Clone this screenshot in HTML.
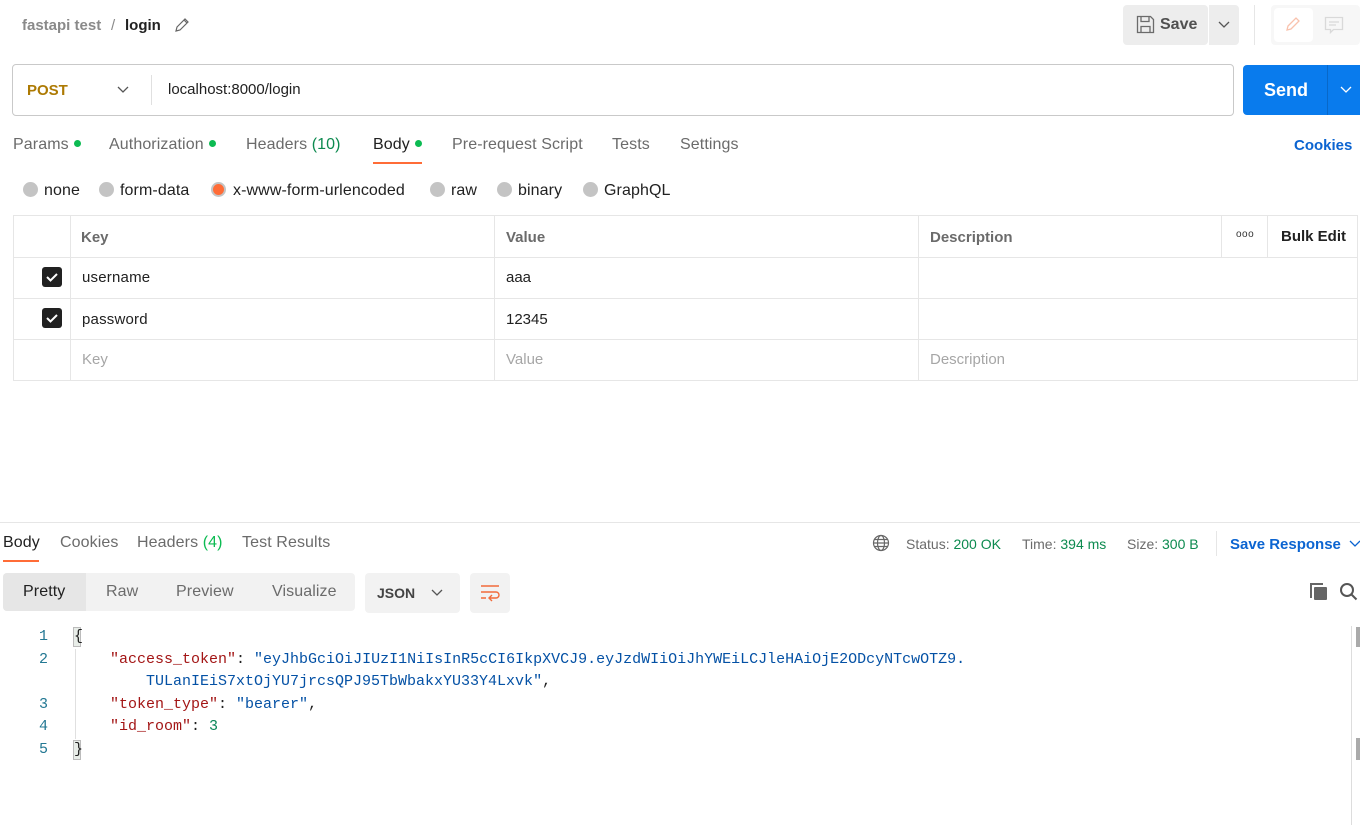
<!DOCTYPE html>
<html><head><meta charset="utf-8"><style>
*{margin:0;padding:0;box-sizing:border-box}
body{width:1360px;height:825px;background:#fff;font-family:"Liberation Sans",sans-serif;color:#212121;position:relative;overflow:hidden;font-size:15px}
.a{position:absolute;white-space:nowrap}
.t{font-size:16px;letter-spacing:0.1px}
.g{color:#6b6b6b}
.dot{display:inline-block;width:7px;height:7px;border-radius:50%;background:#0cbb52;margin-left:5px;vertical-align:2px}
.rad{position:absolute;width:15px;height:15px;border-radius:50%;background:#c4c4c4}
.hl{position:absolute;background:#e6e6e6}
.cb{position:absolute;width:20px;height:20px;border-radius:3px;background:#212121}
.mono{font-family:"Liberation Mono",monospace;font-size:15px}
.k{color:#a31515}.s{color:#0451a5}.n{color:#098658}
.ln{position:absolute;left:20px;width:28px;text-align:right;color:#237893;font-family:"Liberation Mono",monospace;font-size:15px}
</style></head><body>
<div class="a" style="left:22px;top:17px;font-size:15px;font-weight:bold;color:#8a8a8a">fastapi test</div>
<div class="a" style="left:111px;top:17px;font-size:15px;color:#8a8a8a">/</div>
<div class="a" style="left:125px;top:17px;font-size:15px;font-weight:bold;color:#212121">login</div>
<svg class="a" style="left:174px;top:17px" width="16" height="16" viewBox="0 0 16 16"><path d="M2 14l1-4 8-8 3 3-8 8z M10 3l3 3" fill="none" stroke="#666" stroke-width="1.2"/></svg>
<div class="a" style="left:1123px;top:5px;width:85px;height:40px;background:#ededed;border-radius:4px"></div>
<svg class="a" style="left:1136px;top:15px" width="19" height="19" viewBox="0 0 19 19"><path d="M1.5 1.5h13l3 3v13h-16z M5 1.5v5h8v-5 M5 17.5v-6h9v6" fill="none" stroke="#6b6b6b" stroke-width="1.3"/></svg>
<div class="a" style="left:1160px;top:16px;font-weight:bold;color:#505050;font-size:16px">Save</div>
<div class="a" style="left:1209px;top:5px;width:30px;height:40px;background:#ededed;border-radius:0 4px 4px 0"></div>
<svg class="a" style="left:1217px;top:19px" width="14" height="12"><path d="M2 3l5 5 5-5" fill="none" stroke="#555" stroke-width="1.3"/></svg>
<div class="a" style="left:1254px;top:5px;width:1px;height:40px;background:#e6e6e6"></div>
<div class="a" style="left:1271px;top:5px;width:89px;height:40px;background:#f7f7f7;border-radius:4px"></div>
<div class="a" style="left:1274px;top:8px;width:39px;height:34px;background:#fff;border-radius:4px"></div>
<svg class="a" style="left:1284px;top:15px" width="18" height="18" viewBox="0 0 18 18"><path d="M3 15l1-4 8-8 3 3-8 8z" fill="none" stroke="#f9c2ad" stroke-width="1.3"/></svg>
<svg class="a" style="left:1324px;top:16px" width="20" height="18" viewBox="0 0 20 18"><path d="M1.5 1.5h17v12h-9l-3 3v-3h-5z M5 6h10 M5 9h7" fill="none" stroke="#d9d9d9" stroke-width="1.3"/></svg>
<div class="a" style="left:12px;top:64px;width:1222px;height:52px;border:1px solid #c9c9c9;border-radius:4px"></div>
<div class="a" style="left:27px;top:82px;font-weight:bold;color:#ad7a03">POST</div>
<svg class="a" style="left:116px;top:84px" width="14" height="12"><path d="M2 3l5 5 5-5" fill="none" stroke="#555" stroke-width="1.3"/></svg>
<div class="a" style="left:151px;top:75px;width:1px;height:30px;background:#e0e0e0"></div>
<div class="a" style="left:168px;top:81px;color:#212121">localhost:8000/login</div>
<div class="a" style="left:1243px;top:65px;width:117px;height:50px;background:#097bed;border-radius:4px 0 0 4px"></div>
<div class="a" style="left:1327px;top:65px;width:1px;height:50px;background:#0868c9"></div>
<div class="a" style="left:1264px;top:80px;color:#fff;font-weight:bold;font-size:18px">Send</div>
<svg class="a" style="left:1339px;top:84px" width="14" height="12"><path d="M2 3l5 5 5-5" fill="none" stroke="#fff" stroke-width="1.3"/></svg>
<div class="a g t" style="left:13px;top:136px">Params<span class="dot"></span></div>
<div class="a g t" style="left:109px;top:136px">Authorization<span class="dot"></span></div>
<div class="a g t" style="left:246px;top:136px">Headers <span style="color:#0c8a4f">(10)</span></div>
<div class="a t" style="left:373px;top:136px;color:#212121">Body<span class="dot"></span></div>
<div class="a" style="left:373px;top:162px;width:49px;height:2px;background:#ff6c37"></div>
<div class="a g t" style="left:452px;top:136px">Pre-request Script</div>
<div class="a g t" style="left:612px;top:136px">Tests</div>
<div class="a g t" style="left:680px;top:136px">Settings</div>
<div class="a" style="left:1294px;top:137px;color:#0b64d1;font-weight:bold">Cookies</div>
<div class="rad" style="left:23px;top:182px"></div><div class="a t" style="left:44px;top:182px">none</div>
<div class="rad" style="left:99px;top:182px"></div><div class="a t" style="left:120px;top:182px">form-data</div>
<div class="rad" style="left:211px;top:182px;background:#ff6c37;border:2px solid #c4c4c4"></div><div class="a t" style="left:233px;top:182px">x-www-form-urlencoded</div>
<div class="rad" style="left:430px;top:182px"></div><div class="a t" style="left:451px;top:182px">raw</div>
<div class="rad" style="left:497px;top:182px"></div><div class="a t" style="left:518px;top:182px">binary</div>
<div class="rad" style="left:583px;top:182px"></div><div class="a t" style="left:604px;top:182px">GraphQL</div>
<div class="a" style="left:13px;top:215px;width:1345px;height:166px;border:1px solid #e6e6e6"></div>
<div class="hl" style="left:13px;top:257px;width:1345px;height:1px"></div>
<div class="hl" style="left:13px;top:298px;width:1345px;height:1px"></div>
<div class="hl" style="left:13px;top:339px;width:1345px;height:1px"></div>
<div class="hl" style="left:70px;top:215px;width:1px;height:166px"></div>
<div class="hl" style="left:494px;top:215px;width:1px;height:166px"></div>
<div class="hl" style="left:918px;top:215px;width:1px;height:166px"></div>
<div class="hl" style="left:1221px;top:215px;width:1px;height:42px"></div>
<div class="hl" style="left:1267px;top:215px;width:1px;height:42px"></div>
<div class="a" style="left:81px;top:229px;font-weight:bold;color:#6b6b6b">Key</div>
<div class="a" style="left:506px;top:229px;font-weight:bold;color:#6b6b6b">Value</div>
<div class="a" style="left:930px;top:229px;font-weight:bold;color:#6b6b6b">Description</div>
<div class="a" style="left:1236px;top:229px;font-size:10px;color:#333;letter-spacing:0.5px">ooo</div>
<div class="a" style="left:1281px;top:228px;font-weight:bold;color:#212121">Bulk Edit</div>
<div class="cb" style="left:42px;top:267px"></div><svg class="a" style="left:45px;top:270px" width="14" height="14"><path d="M2 7l3.5 3.5L12 4" fill="none" stroke="#fff" stroke-width="2"/></svg>
<div class="cb" style="left:42px;top:308px"></div><svg class="a" style="left:45px;top:311px" width="14" height="14"><path d="M2 7l3.5 3.5L12 4" fill="none" stroke="#fff" stroke-width="2"/></svg>
<div class="a" style="left:82px;top:269px;letter-spacing:0.2px">username</div>
<div class="a" style="left:506px;top:269px">aaa</div>
<div class="a" style="left:82px;top:311px;letter-spacing:0.2px">password</div>
<div class="a" style="left:506px;top:311px">12345</div>
<div class="a" style="left:82px;top:351px;color:#a6a6a6">Key</div>
<div class="a" style="left:506px;top:351px;color:#a6a6a6">Value</div>
<div class="a" style="left:930px;top:351px;color:#a6a6a6">Description</div>
<div class="hl" style="left:0;top:522px;width:1360px;height:1px"></div>
<div class="a t" style="left:3px;top:534px">Body</div>
<div class="a" style="left:3px;top:560px;width:36px;height:2px;background:#ff6c37"></div>
<div class="a g t" style="left:60px;top:534px">Cookies</div>
<div class="a g t" style="left:137px;top:534px">Headers <span style="color:#0cbb52">(4)</span></div>
<div class="a g t" style="left:242px;top:534px">Test Results</div>
<svg class="a" style="left:872px;top:534px" width="18" height="18" viewBox="0 0 18 18" fill="none" stroke="#666" stroke-width="1.2"><circle cx="9" cy="9" r="7.5"/><ellipse cx="9" cy="9" rx="3.5" ry="7.5"/><path d="M1.5 9h15M2.5 5.5h13M2.5 12.5h13"/></svg>
<div class="a" style="left:906px;top:536px;font-size:14px"><span class="g">Status:</span> <span style="color:#0c8a4f">200 OK</span></div>
<div class="a" style="left:1022px;top:536px;font-size:14px"><span class="g">Time:</span> <span style="color:#0c8a4f">394 ms</span></div>
<div class="a" style="left:1127px;top:536px;font-size:14px"><span class="g">Size:</span> <span style="color:#0c8a4f">300 B</span></div>
<div class="hl" style="left:1216px;top:531px;width:1px;height:25px"></div>
<div class="a" style="left:1230px;top:536px;color:#0b64d1;font-weight:bold">Save Response</div>
<svg class="a" style="left:1348px;top:538px" width="14" height="12"><path d="M2 3l5 5 5-5" fill="none" stroke="#0b64d1" stroke-width="1.3"/></svg>
<div class="a" style="left:3px;top:573px;width:352px;height:38px;background:#f2f2f2;border-radius:4px"></div>
<div class="a" style="left:3px;top:573px;width:83px;height:38px;background:#e6e6e6;border-radius:4px 0 0 4px"></div>
<div class="a t" style="left:23px;top:583px;color:#212121">Pretty</div>
<div class="a g t" style="left:106px;top:583px">Raw</div>
<div class="a g t" style="left:176px;top:583px">Preview</div>
<div class="a g t" style="left:272px;top:583px">Visualize</div>
<div class="a" style="left:365px;top:573px;width:95px;height:40px;background:#f2f2f2;border-radius:4px"></div>
<div class="a" style="left:377px;top:585px;font-weight:bold;color:#444;font-size:14px">JSON</div>
<svg class="a" style="left:430px;top:587px" width="14" height="12"><path d="M2 3l5 5 5-5" fill="none" stroke="#555" stroke-width="1.3"/></svg>
<div class="a" style="left:470px;top:573px;width:40px;height:40px;background:#f2f2f2;border-radius:4px"></div>
<svg class="a" style="left:479px;top:584px" width="22" height="18" viewBox="0 0 22 18" fill="none" stroke="#f26b3a" stroke-width="1.4"><path d="M2 2h18M2 8h15a3 3 0 0 1 0 6h-6M13 11l-3 3 3 3M2 14h5"/></svg>
<svg class="a" style="left:1309px;top:582px" width="19" height="19" viewBox="0 0 19 19"><path d="M1 3v13h2V3z M1 1h13v2H1z" fill="#666"/><rect x="5" y="5" width="13" height="13" rx="1" fill="#666"/></svg>
<svg class="a" style="left:1339px;top:582px" width="20" height="20" viewBox="0 0 20 20" fill="none" stroke="#555" stroke-width="2"><circle cx="8" cy="8" r="6"/><path d="M12.5 12.5l5 5"/></svg>
<div class="ln" style="top:628px">1</div>
<div class="ln" style="top:651px">2</div>
<div class="ln" style="top:696px">3</div>
<div class="ln" style="top:718px">4</div>
<div class="ln" style="top:741px">5</div>
<div class="a" style="left:73px;top:627px;width:8px;height:20px;background:#e8ede8;border:1px solid #bbb"></div>
<div class="a" style="left:73px;top:740px;width:8px;height:20px;background:#e8ede8;border:1px solid #bbb"></div>
<div class="a" style="left:75px;top:649px;width:1px;height:90px;background:#e0e0e0"></div>
<div class="a mono" style="left:74px;top:628px">{</div>
<div class="a mono" style="left:110px;top:651px"><span class="k">"access_token"</span>: <span class="s">"eyJhbGciOiJIUzI1NiIsInR5cCI6IkpXVCJ9.eyJzdWIiOiJhYWEiLCJleHAiOjE2ODcyNTcwOTZ9.</span></div>
<div class="a mono" style="left:146px;top:673px"><span class="s">TULanIEiS7xtOjYU7jrcsQPJ95TbWbakxYU33Y4Lxvk"</span>,</div>
<div class="a mono" style="left:110px;top:696px"><span class="k">"token_type"</span>: <span class="s">"bearer"</span>,</div>
<div class="a mono" style="left:110px;top:718px"><span class="k">"id_room"</span>: <span class="n">3</span></div>
<div class="a mono" style="left:74px;top:741px">}</div>
<div class="a" style="left:1351px;top:626px;width:1px;height:199px;background:#ddd"></div>
<div class="a" style="left:1356px;top:627px;width:4px;height:20px;background:#aaa"></div>
<div class="a" style="left:1356px;top:738px;width:4px;height:22px;background:#aaa"></div>
</body></html>
